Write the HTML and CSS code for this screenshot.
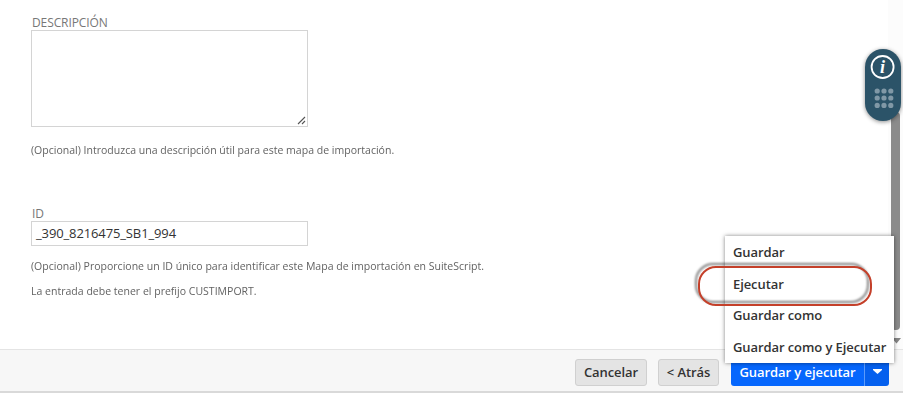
FILE: index.html
```html
<!DOCTYPE html>
<html lang="es">
<head>
<meta charset="utf-8">
<title>Mapa de importación</title>
<link rel="stylesheet" href="styles.css">
</head>
<body>
<main class="form">
  <label class="label" for="desc">DESCRIPCIÓN</label>
  <div class="area-box" id="desc">
    <svg class="grip" width="9" height="9" viewBox="0 0 9 9"><path d="M1 8 8 1M5 8 8 5"/></svg>
  </div>
  <p class="help help-desc">(Opcional) Introduzca una descripción útil para este mapa de importación.</p>
  <label class="label label-id">ID</label>
  <div class="input-box">_390_8216475_SB1_994</div>
  <p class="help help-id">(Opcional) Proporcione un ID único para identificar este Mapa de importación en SuiteScript.</p>
  <p class="help help-prefix">La entrada debe tener el prefijo CUSTIMPORT.</p>
</main>
<footer class="bar">
  <button class="btn cancel">Cancelar</button>
  <button class="btn back">&lt; Atrás</button>
  <div class="split">
    <button class="primary">Guardar y ejecutar</button>
    <button class="toggle" aria-label="Más"><svg width="9" height="5" viewBox="0 0 9 5"><path d="M0 0H9V1L4.5 5 0 1Z"/></svg></button>
  </div>
</footer>
<div class="track">
  <div class="thumb"></div>
  <svg class="down" width="9" height="6" viewBox="0 0 9 6"><path d="M0 0H9L4.5 5.5Z"/></svg>
</div>
<div class="widget">
  <svg width="36" height="72" viewBox="0 0 36 72">
    <circle class="ring" cx="17.6" cy="18" r="11"/>
    <text class="info" x="17.6" y="24.3">i</text>
    <g class="dots">
      <circle cx="12.2" cy="42" r="2.6"/><circle cx="19" cy="42" r="2.6"/><circle cx="25.8" cy="42" r="2.6"/>
      <circle cx="12.2" cy="49" r="2.6"/><circle cx="19" cy="49" r="2.6"/><circle cx="25.8" cy="49" r="2.6"/>
      <circle cx="12.2" cy="56.4" r="2.6"/><circle cx="19" cy="56.4" r="2.6"/><circle cx="25.8" cy="56.4" r="2.6"/>
    </g>
  </svg>
</div>
<div class="menu">
  <div class="item">Guardar</div>
  <div class="item">Ejecutar</div>
  <div class="item">Guardar como</div>
  <div class="item">Guardar como y Ejecutar</div>
</div>
<div class="callout"></div>
</body>
</html>
```
FILE: styles.css
```css
* { box-sizing: border-box; }
body {
  margin: 0;
  height: 410px;
  overflow: hidden;
  position: relative;
  display: flex;
  flex-direction: column;
  background: #fff;
  font-family: "Open Sans", "Noto Sans", sans-serif;
  color: #333;
}
.form { height: 349px; padding: 15px 0 0 31px; }
.label { display: block; font-size: 12px; line-height: 15px; color: #777; padding-left: 1px; letter-spacing: -.1px; }
.area-box { position: relative; width: 277px; height: 97px; border: 1px solid #d4d4d4; }
.grip { position: absolute; right: 1px; bottom: 1px; fill: none; stroke: #555; stroke-width: 1.1; }
.help { margin: 0; font-size: 11.6px; line-height: 16px; color: #636363; white-space: nowrap; width: max-content; transform: scaleX(.908); transform-origin: 0 0; }
.help-desc { margin-top: 15px; }
.label-id { margin-top: 48px; }
.input-box { width: 277px; height: 25px; border: 1px solid #d4d4d4; padding-left: 4px; font-size: 13px; line-height: 23px; letter-spacing: -.12px; }
.help-id { margin-top: 12px; }
.help-prefix { margin-top: 9px; }
.bar {
  height: 44px;
  display: flex;
  align-items: flex-start;
  padding: 9px 0 0 575px;
  background: #f7f7f7;
  border-top: 1px solid #e4e4e4;
  border-bottom: 2px solid #d9d9d9;
}
button { font: 600 13px/24px "Open Sans", sans-serif; padding: 0 0 2px; margin: 0; white-space: nowrap; letter-spacing: -.07px; }
.btn { height: 27px; color: #333; background: #e4e4e4; border: 1px solid #d0d0d0; border-radius: 3px; }
.cancel { width: 72px; }
.back { width: 61px; margin-left: 11px; }
.split { display: flex; margin-left: 12px; height: 27px; border-radius: 3px; overflow: hidden; }
.primary { width: 133px; color: #fff; background: #0667fd; border: 0; padding-bottom: 1px; }
.toggle { width: 25px; background: #0560ee; border: 0; border-left: 1px solid #5c9bfb; display: flex; align-items: center; justify-content: center; }
.toggle path { fill: #fff; }
.track { position: absolute; top: 0; left: 888px; width: 15px; height: 349px; background: #fcfcfc; }
.thumb { position: absolute; left: 3px; top: 112px; width: 9px; height: 218px; border-radius: 4px; background: #8b8b8b; }
.down { position: absolute; left: 4px; top: 338px; fill: #858585; }
.widget { position: absolute; left: 865px; top: 49px; width: 36px; height: 72px; border-radius: 18px; background: #2b5368; box-shadow: 0 1px 4px rgba(0,0,0,.45); }
.widget svg { display: block; }
.ring { fill: none; stroke: #fff; stroke-width: 1.8; }
.info { font: italic bold 18px "Liberation Serif", serif; fill: #fff; text-anchor: middle; }
.dots { fill: #8098a6; }
.menu { position: absolute; left: 725px; top: 236px; width: 169px; height: 127px; background: #fff; box-shadow: 0 0 4px rgba(0,0,0,.5); }
.item { height: 31.6px; padding-left: 8px; font-size: 13px; font-weight: 600; line-height: 32px; white-space: nowrap; letter-spacing: -.09px; }
.callout { position: absolute; left: 698px; top: 266px; width: 174px; height: 40px; border: 2px solid #c4402a; border-radius: 18px; filter: drop-shadow(-3px -3px 1px rgba(0,0,0,.5)); }
```
